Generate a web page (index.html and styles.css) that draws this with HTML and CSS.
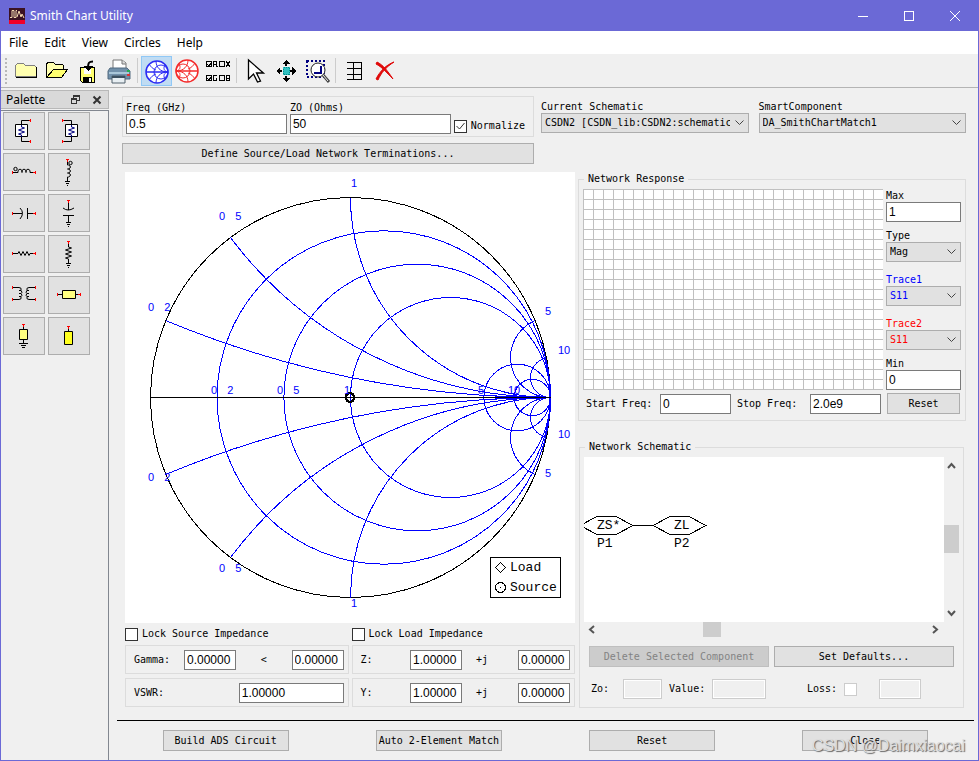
FILE: index.html
```html
<!DOCTYPE html>
<html lang="en">
<head>
<meta charset="utf-8">
<title>Smith Chart Utility</title>
<link rel="stylesheet" href="styles.css">
</head>
<body>
<div class="window">
  <header class="titlebar">
    <svg class="app-icon" width="16" height="16" viewBox="0 0 16 16" aria-hidden="true">
      <rect width="16" height="16" rx="1" fill="#3b1222"/>
      <rect y="12" width="16" height="4" fill="#f00028"/>
      <path class="smooth" d="M1 9.500h2v-7h2v7h2v-7h1M8 9l2-6 2 6 1-3 2 4" fill="none" stroke="#f4d9b0"/>
    </svg>
    <h1>Smith Chart Utility</h1>
    <div class="window-controls">
      <button aria-label="Minimize"><svg width="12" height="12" viewBox="0 0 12 12"><path d="M1 6.500h10"/></svg></button>
      <button aria-label="Maximize"><svg width="12" height="12" viewBox="0 0 12 12"><path d="M1.500 1.500h9v9h-9z"/></svg></button>
      <button aria-label="Close window"><svg class="smooth" width="12" height="12" viewBox="0 0 12 12"><path d="M1 1l10 10M11 1L1 11"/></svg></button>
    </div>
  </header>

  <nav class="menubar">
    <button>File</button><button>Edit</button><button>View</button><button>Circles</button><button>Help</button>
  </nav>

  <div class="toolbar">
    <span class="grip"></span>
    <button aria-label="New"><svg viewBox="0 0 31 30">
      <path d="M4.500 20.500v-11l2-2h6l2 2h9l2 2v9z" fill="#ffffb0" stroke="#808080"/>
      <path d="M5 21.500h20.500v-11" fill="none" stroke="#000"/>
    </svg></button>
    <button aria-label="Open"><svg viewBox="0 0 31 30">
      <path d="M4.500 20.500v-12l1-2h6l2 2h7l1 1v4" fill="#ffffb0" stroke="#000"/>
      <path d="M4.500 21.500l7-8h14l-6 8z" fill="#ffff70" stroke="#000"/>
    </svg></button>
    <button aria-label="Save"><svg viewBox="0 0 31 30">
      <path d="M7.500 11.500h14v15h-12l-2-2z" fill="#ffff70" stroke="#000"/>
      <path d="M11 12h7v6h-7z" fill="#fff"/>
      <path d="M10 21h9v6h-9z"/>
      <path d="M16 22h2v4h-2z" fill="#fff"/>
      <path class="smooth" d="M20 5.500c-4 0-5 1-5 7" fill="none" stroke="#000" stroke-width="2"/>
      <path d="M10 10h10l-5 5z"/>
    </svg></button>
    <button aria-label="Print"><svg class="smooth" viewBox="0 0 31 30">
      <path d="M9 14V4h9l4 3v7z" fill="#fff" stroke="#777"/>
      <path d="M18 4v4h4" fill="#ddd" stroke="#777"/>
      <path d="M6 12h17l3 3v8H4v-8z" fill="#7190aa" stroke="#536b80"/>
      <path d="M5 17h20" stroke="#a9c6d8" stroke-width="2"/>
      <path d="M8 20h13v7H8z" fill="#e7eef2" stroke="#50606d"/>
      <path d="M8 20h13v2H8z" fill="#3c5060"/>
      <path d="M23 14h3v2h-3z" fill="#20b050"/><path d="M23 18h3v2h-3z" fill="#d33"/>
    </svg></button>
    <span class="separator"></span>
    <button class="active" aria-label="Impedance chart"><svg class="smooth" viewBox="0 0 31 30">
      <g fill="none" stroke="#2a2af4">
        <circle cx="16" cy="16" r="11" fill="#fff" stroke-width="1.500"/>
        <circle cx="20" cy="16" r="7"/>
        <path d="M5 16h22" stroke-width="1.500"/>
        <path d="M15 5c0 6 4 11 12 11-8 0-12 5-12 11M8 8c2 3 4 5 7 6M8 24c2-3 4-5 7-6M27 16c-4-1-5-3-3-8M27 16c-4 1-5 3-3 8"/>
      </g>
    </svg></button>
    <button aria-label="Admittance chart"><svg class="smooth" viewBox="0 0 31 30">
      <g fill="none" stroke="#f42a2a">
        <circle cx="15" cy="15" r="11" fill="#fff" stroke-width="1.500"/>
        <circle cx="11" cy="15" r="7"/>
        <path d="M4 15h22" stroke-width="1.500"/>
        <path d="M16 4c0 6-4 11-12 11 8 0 12 5 12 11M23 7c-2 3-4 5-7 6M23 23c-2-3-4-5-7-6M4 15c4-1 5-3 3-8M4 15c4 1 5 3 3 8"/>
      </g>
    </svg></button>
    <button aria-label="Trace colors"><svg viewBox="0 0 31 30">
      <g fill="none" stroke="#000">
        <path d="M3.500 5.500h5v5h-5zM16.500 5.500h5v5h-5zM3.500 19.500h5v5h-5zM16.500 19.500h5v5h-5z"/>
        <path d="M4 8l2 2 3-4M4 22l2 2 3-4"/>
        <path d="M10.500 11V5.500h3v3h-3M12.500 8.500l2 2.500M23 5l4 6M27 5l-4 6"/>
        <path d="M14 19.500h-3.500v5h3v-2.500h-1M23.500 19.500h3v5h-3zM23 22h3"/>
      </g>
    </svg></button>
    <span class="separator"></span>
    <button aria-label="Select"><svg class="smooth" viewBox="0 0 31 30">
      <path d="M8.500 4v19l5-5 4 8 3-1-4-8h7z" fill="#fff" stroke="#000" stroke-width="1.300"/>
    </svg></button>
    <button aria-label="Pan"><svg viewBox="0 0 31 30">
      <path d="M15 4l4 4h-3v2h-2V8h-3zM15 26l4-4h-3v-2h-2v2h-3zM5 15l4-4v3h2v2H9v3zM25 15l-4-4v3h-2v2h2v3z"/>
      <path d="M12 11h7v8h-7z" fill="#30c0c0"/><path d="M12.500 11.500h6v7h-6z" fill="none" stroke="#088" stroke-dasharray="1 1"/>
    </svg></button>
    <button aria-label="Zoom area"><svg class="smooth" viewBox="0 0 31 30">
      <path d="M5 5h17v16H5z" fill="none" stroke="#000080" stroke-width="2" stroke-dasharray="2 2"/>
      <circle cx="16" cy="14" r="7" fill="#fff" stroke="#222"/>
      <path d="M12 17h7v-7" fill="none" stroke="#000080" stroke-width="2"/>
      <path d="M21 19l6 7" stroke="#444" stroke-width="3"/><path d="M21 19l5 6" stroke="#eee"/>
    </svg></button>
    <span class="separator"></span>
    <button aria-label="Table"><svg viewBox="0 0 31 30">
      <path d="M8 6.500h15M8 12.500h15M8 18.500h15M8 23.500h15M14.500 6v18M22.500 6v18" fill="none" stroke="#000"/>
    </svg></button>
    <button aria-label="Delete"><svg class="smooth" viewBox="0 0 31 30">
      <path d="M7 6c6 3 10 8 16 17-7-7-11-12-17-15zM24 6C16 11 11 17 8 24l-2-1C10 15 16 9 24 6z" fill="#e00808" stroke="#e00808"/>
    </svg></button>
  </div>

  <div class="body">
    <aside class="palette">
      <div class="palette-head">
        <h2>Palette</h2>
        <button aria-label="Float palette"><svg width="10" height="10" viewBox="0 0 10 10"><path class="thin" d="M2.500 3V.500h6v5H6M2 1.500h7M.500 3.500h5v5h-5zM0 4.500h6"/></svg></button>
        <button aria-label="Close palette"><svg class="smooth" width="10" height="10" viewBox="0 0 10 10"><path d="M1.500 1.500l7 7M8.500 1.500l-7 7"/></svg></button>
      </div>
      <div class="parts">
        <button aria-label="Source impedance"><svg viewBox="0 0 42 38">
          <path class="w" d="M26 8.500h-7.500v21H26"/><path class="box" d="M12.500 12.500h12v12h-12z"/>
          <path class="z" d="M18.500 13v2l3 1-6 2 6 2-6 2 3 1v2"/><path class="t" d="M27.500 7v3M27.500 28v3M26 8.500h1M26 29.500h1"/></svg></button>
        <button aria-label="Load impedance"><svg viewBox="0 0 42 38">
          <path class="w" d="M16 8.500h7.500v21H16"/><path class="box" d="M17.500 12.500h12v12h-12z"/>
          <path class="z" d="M23.500 13v2l3 1-6 2 6 2-6 2 3 1v2"/><path class="t" d="M14.500 7v3M14.500 28v3M15 8.500h1M15 29.500h1"/></svg></button>
        <button aria-label="Series inductor"><svg viewBox="0 0 42 38">
          <path class="w" d="M10 19.500h5v-2q2-3 4 0v2-2q2-3 4 0v2-2q2-3 4 0v2h5"/><circle class="w" cx="12.500" cy="16" r="1.700"/>
          <path class="t" d="M9.500 18v3M32.500 18v3M30 19.500h2"/></svg></button>
        <button aria-label="Shunt inductor"><svg viewBox="0 0 42 38">
          <path class="w" d="M19.500 8v4h1q4 2 0 4h-1 1q4 2 0 4h-1 1q4 2 0 4h-1v4M17 28.500h5M18 30.500h3M19 32.500h1"/><circle class="w" cx="22.500" cy="10" r="1.700"/>
          <path class="t" d="M18 6.500h3M19.500 7v2"/></svg></button>
        <button aria-label="Series capacitor"><svg viewBox="0 0 42 38">
          <path class="w" d="M10 19.500h9M17 14q5 5 0 11M24.500 14v11M24.500 19.500H32"/>
          <path class="t" d="M9.500 18v3M32.500 18v3M30 19.500h2"/></svg></button>
        <button aria-label="Shunt capacitor"><svg viewBox="0 0 42 38">
          <path class="w" d="M20.500 8v8M15 14q5 4 11 0M15 21.500h11M20.500 22v6M18 28.500h5M19 30.500h3M20 32.500h1"/>
          <path class="t" d="M19 6.500h3M20.500 7v2"/></svg></button>
        <button aria-label="Series resistor"><svg viewBox="0 0 42 38">
          <path class="w" d="M10 18.500h5l1-2 2 4 2-4 2 4 2-4 2 4 1-2h5"/>
          <path class="t" d="M9.500 17v3M32.500 17v3M30 18.500h2"/></svg></button>
        <button aria-label="Shunt resistor"><svg viewBox="0 0 42 38">
          <path class="w" d="M20.500 8v4l3 1-6 2 6 2-6 2 6 2-6 2 3 1v4M18 28.500h5M19 30.500h3M20 32.500h1"/>
          <path class="t" d="M19 6.500h3M20.500 7v2"/></svg></button>
        <button aria-label="Transformer"><svg viewBox="0 0 42 38">
          <path class="w" d="M10 11.500h6q3 0 2 3h-2 2q2 2 0 3h-2 2q2 2 0 3h-2 2q1 3-2 3h-6M32 11.500h-6q-3 0-2 3h2-2q-2 2 0 3h2-2q-2 2 0 3h2-2q-1 3 2 3h6"/>
          <path class="t" d="M9.500 10v3M9.500 22v3M32.500 10v3M32.500 22v3"/></svg></button>
        <button aria-label="Series transmission line"><svg viewBox="0 0 42 38">
          <path class="w" d="M10 18.500h22"/><path class="line" d="M14.500 14.500h13v8h-13z"/>
          <path class="t" d="M9.500 17v3M32.500 17v3M30 18.500h2"/></svg></button>
        <button aria-label="Shorted stub"><svg viewBox="0 0 42 38">
          <path class="w" d="M20.500 8v18M16 26.500h9M18 28.500h5M19 30.500h3"/><path class="line" d="M16.500 12.500h8v10h-8z"/>
          <path class="t" d="M19 7.500h3M20.500 8v2"/></svg></button>
        <button aria-label="Open stub"><svg viewBox="0 0 42 38">
          <path class="w" d="M20.500 10v5"/><path class="line open" d="M16.500 14.500h8v13h-8z"/>
          <path class="t" d="M19 9.500h3M20.500 10v2"/></svg></button>
      </div>
    </aside>

    <main>
      <section class="settings">
        <div class="settings-left">
          <div class="group freq">
            <label class="stack">Freq (GHz)<input type="text" value="0.5"></label>
            <label class="stack">ZO (Ohms)<input type="text" value="50"></label>
            <label class="check"><input type="checkbox" checked>Normalize</label>
          </div>
          <button class="btn">Define Source/Load Network Terminations...</button>
        </div>
        <div class="settings-right">
          <label class="stack">Current Schematic<select><option>CSDN2 [CSDN_lib:CSDN2:schematic]</option></select></label>
          <label class="stack">SmartComponent<select><option>DA_SmithChartMatch1</option></select></label>
        </div>
      </section>

      <section class="work">
        <div class="chart-column">
          <svg class="chart" viewBox="0 0 450 451" role="img" aria-label="Smith chart">
            <rect width="450" height="451" fill="#fff"/>
            <circle class="k" cx="225.500" cy="225.500" r="200"/>
            <g class="b">
              <circle cx="258.800" cy="225.500" r="166.700"/>
              <circle cx="292.200" cy="225.500" r="133.300"/>
              <circle cx="325.500" cy="225.500" r="100"/>
              <circle cx="392.200" cy="225.500" r="33.300"/>
              <circle cx="407.300" cy="225.500" r="18.200"/>
              <path d="M425.500 225.500A1000 1000 0 0 1 40.900 148.600M425.500 225.500A1000 1000 0 0 0 40.900 302.400"/>
              <path d="M425.500 225.500A400 400 0 0 1 105.500 65.500M425.500 225.500A400 400 0 0 0 105.500 385.500"/>
              <path d="M425.500 225.500A200 200 0 0 1 225.500 25.500M425.500 225.500A200 200 0 0 0 225.500 425.500"/>
              <path d="M425.500 225.500A40 40 0 0 1 410.100 148.600M425.500 225.500A40 40 0 0 0 410.100 302.400"/>
              <path d="M425.500 225.500A20 20 0 0 1 421.500 185.900M425.500 225.500A20 20 0 0 0 421.500 265.100"/>
              <path d="M370 224.500h46M370 226.500h46M424.500 210v32M425.500 212v28"/>
            </g>
            <path class="k" d="M25.500 225.500h400"/>
            <g class="k"><circle cx="225" cy="225.500" r="5"/><path d="M225 220.500l5 5-5 5-5-5z"/></g>
            <g class="tick">
              <text x="226" y="15">1</text><text x="226" y="435">1</text>
              <text x="94" y="48">0<tspan dx="10">5</tspan></text><text x="94" y="400">0<tspan dx="10">5</tspan></text>
              <text x="23" y="139">0<tspan dx="10">2</tspan></text><text x="23" y="309">0<tspan dx="10">2</tspan></text>
              <text x="86" y="222">0<tspan dx="10">2</tspan></text><text x="152" y="222">0<tspan dx="10">5</tspan></text>
              <text x="219" y="222">1</text><text x="353" y="222">5</text><text x="383" y="222">10</text>
              <text x="420" y="143">5</text><text x="420" y="305">5</text>
              <text x="433" y="182">10</text><text x="433" y="266">10</text>
            </g>
            <path class="k" d="M365.500 385.500h70v40h-70zM375.500 390.500l5 5-5 5-5-5z"/>
            <circle class="k" cx="375.500" cy="415.500" r="5"/><path class="k" d="M375 415.500h1"/>
            <g class="vector"><text x="385" y="399">Load</text><text x="385" y="419">Source</text></g>
          </svg>
          <div class="terminations">
            <div class="side">
              <label class="check"><input type="checkbox">Lock Source Impedance</label>
              <div class="group pair"><label for="gm">Gamma:</label><input id="gm" type="text" value="0.00000"><label for="ga">&lt;</label><input id="ga" type="text" value="0.00000"></div>
              <div class="group single"><label for="vs">VSWR:</label><input id="vs" type="text" value="1.00000"></div>
            </div>
            <div class="side">
              <label class="check"><input type="checkbox">Lock Load Impedance</label>
              <div class="group pair"><label for="zr">Z:</label><input id="zr" type="text" value="1.00000"><label for="zi">+j</label><input id="zi" type="text" value="0.00000"></div>
              <div class="group pair"><label for="yr">Y:</label><input id="yr" type="text" value="1.00000"><label for="yi">+j</label><input id="yi" type="text" value="0.00000"></div>
            </div>
          </div>
        </div>

        <div class="network-column">
          <fieldset class="response">
            <legend>Network Response</legend>
            <div class="response-main">
              <div class="plot"></div>
              <div class="response-side">
                <label class="stack">Max<input type="text" value="1"></label>
                <label class="stack">Type<select><option>Mag</option></select></label>
                <label class="stack blue">Trace1<select><option>S11</option></select></label>
                <label class="stack red">Trace2<select><option>S11</option></select></label>
                <label class="stack">Min<input type="text" value="0"></label>
              </div>
            </div>
            <div class="range">
              <label for="start">Start Freq:</label><input id="start" type="text" value="0">
              <label for="stop">Stop Freq:</label><input id="stop" type="text" value="2.0e9">
              <button class="btn">Reset</button>
            </div>
          </fieldset>

          <fieldset class="schematic">
            <legend>Network Schematic</legend>
            <div class="viewport">
              <div class="canvas">
                <svg width="130" height="100" viewBox="0 0 130 100">
                  <path class="k" d="M-4 68.500l17-9h19l17 9-17 9H13zM49 68.500h20M69 68.500l17-9h19l17 9-17 9H86z"/>
                  <g class="vector"><text x="13" y="72">ZS*</text><text x="90" y="72">ZL</text><text x="13" y="90">P1</text><text x="90" y="90">P2</text></g>
                </svg>
              </div>
              <div class="scroll vertical">
                <svg width="15" height="16" viewBox="0 0 15 16"><path d="M4 11l3.500-4 3.500 4"/></svg>
                <span class="thumb"></span>
                <svg width="15" height="16" viewBox="0 0 15 16"><path d="M4 5l3.500 4 3.500-4"/></svg>
              </div>
              <div class="scroll horizontal">
                <svg width="16" height="15" viewBox="0 0 16 15"><path d="M10 4L6 7.500l4 3.500"/></svg>
                <span class="thumb"></span>
                <svg width="16" height="15" viewBox="0 0 16 15"><path d="M5 4l4 3.500L5 11"/></svg>
              </div>
            </div>
            <div class="actions">
              <button class="btn" disabled>Delete Selected Component</button>
              <button class="btn">Set Defaults...</button>
            </div>
            <div class="values">
              <label for="zo">Zo:</label><input id="zo" type="text" disabled>
              <label for="value">Value:</label><input id="value" type="text" disabled>
              <label for="loss">Loss:</label><input id="loss" type="checkbox" disabled><input type="text" aria-label="Loss value" disabled>
            </div>
          </fieldset>
        </div>
      </section>

      <footer>
        <button class="btn">Build ADS Circuit</button>
        <button class="btn">Auto 2-Element Match</button>
        <button class="btn">Reset</button>
        <button class="btn">Close</button>
      </footer>
    </main>
  </div>
  <div class="watermark">CSDN @Daimxiaocai</div>
</div>
</body>
</html>
```
FILE: styles.css
```css
* { box-sizing: border-box; }

body {
  margin: 0;
  background: #f0f0f0;
  color: #000;
  font: 10px/12px "DejaVu Sans Mono", "Liberation Mono", monospace;
}

button, input, select { font: inherit; color: inherit; margin: 0; }
button { padding: 0; border: 0; background: none; }
h1, h2 { margin: 0; font-weight: normal; }
svg { display: block; shape-rendering: crispEdges; }
.smooth { shape-rendering: auto; }

.window {
  position: relative;
  display: flex;
  flex-direction: column;
  min-height: 100vh;
  border: 1px solid #6b69d6;
}

/* Title bar, menus and toolbar */
.titlebar {
  display: flex;
  align-items: center;
  height: 30px;
  padding-left: 8px;
  background: #6b69d6;
  color: #fff;
}
.titlebar h1, .menubar, .palette h2 { font: 12px/16px "Noto Sans", "Open Sans", sans-serif; }
.titlebar h1 { margin-left: 5px; }
.window-controls { display: flex; margin-left: auto; }
.window-controls button { width: 46px; height: 28px; display: grid; place-items: center; }
.window-controls path { fill: none; stroke: #fff; }

.menubar { display: flex; height: 23px; background: #fff; }
.menubar button { padding: 0 8px; }

.toolbar {
  display: flex;
  height: 34px;
  padding-top: 2px;
  border-bottom: 1px solid #b4b4b4;
}
.toolbar button { width: 31px; height: 30px; }
.toolbar .active { background: #c0dcf3; box-shadow: inset 0 0 0 1px #90c8f6; }
.grip { width: 10px; }
.grip::before {
  content: "";
  display: block;
  width: 2px;
  height: 26px;
  margin: 2px 4px;
  background: repeating-linear-gradient(#b8b8b8 0 2px, transparent 2px 4px);
}
.separator { width: 6px; padding: 2px; }
.separator::before { content: ""; display: block; width: 1px; height: 25px; background: #ccc; }

.body { display: flex; flex: 1; }

/* Palette */
.palette { flex: none; width: 108px; padding-top: 2px; }
.palette-head {
  display: flex;
  align-items: center;
  height: 19px;
  padding: 0 6px 0 5px;
  gap: 11px;
  background: #d9d9d9;
  border: 1px solid #b8b8b8;
  border-left: 0;
}
.palette-head h2 { flex: 1; }
.palette-head path { fill: none; stroke: #333; stroke-width: 2; }
.palette-head .thin { stroke-width: 1; }
.parts {
  display: grid;
  grid-template-columns: 42px 42px;
  align-content: start;
  gap: 3px;
  height: calc(100% - 20px);
  margin-top: 1px;
  padding: 1px 2px;
  border-top: 1px solid #828790;
  border-right: 1px solid #828790;
}
.parts button { height: 38px; background: #e1e1e1; box-shadow: inset 0 0 0 1px #adadad; }
.parts svg { shape-rendering: auto; }
.w { fill: none; stroke: #000; }
.z { fill: none; stroke: #000080; }
.t { fill: none; stroke: #f00; }
.box { fill: #fff; stroke: #000; }
.line { fill: #ffff80; stroke: #000; }
.line.open { fill: #ffff20; }

/* Shared controls */
input[type="text"] {
  min-width: 0;
  height: 20px;
  padding: 0 2px;
  border: 1px solid #7a7a7a;
  border-radius: 0;
  background: #fff;
  font: 12px/16px "Liberation Sans", sans-serif;
}
input[type="text"]:disabled { background: #f0f0f0; border-color: #ccc; box-shadow: inset 0 0 0 1px #fff; }
select {
  appearance: none;
  min-width: 0;
  height: 20px;
  padding: 0 18px 0 3px;
  border: 1px solid #adadad;
  border-radius: 0;
  background: #e1e1e1 url("data:image/svg+xml,%3Csvg xmlns='http://www.w3.org/2000/svg' width='9' height='6'%3E%3Cpath d='M.5.5l4 4 4-4' fill='none' stroke='%23444'/%3E%3C/svg%3E") no-repeat right 4px center;
}
input[type="checkbox"] {
  appearance: none;
  width: 13px;
  height: 13px;
  border: 1px solid #333;
  background: #fff;
}
input[type="checkbox"]:checked {
  background: #fff url("data:image/svg+xml,%3Csvg xmlns='http://www.w3.org/2000/svg' width='11' height='11'%3E%3Cpath d='M1.500 5l3 3 5-6' fill='none' stroke='%23333'/%3E%3C/svg%3E");
}
input[type="checkbox"]:disabled { border-color: #ccc; }
.btn { height: 21px; background: #e1e1e1; border: 1px solid #adadad; text-align: center; }
.btn:disabled { background: #ccc; border-color: #bfbfbf; color: #838383; }
.group { border: 1px solid #dcdcdc; }
.stack { display: flex; flex-direction: column; min-width: 0; }
.stack select, .stack input { width: 100%; }
.check { display: flex; align-items: center; gap: 4px; }
.blue { color: #00f; }
.red { color: #f00; }

/* Main area */
main { flex: 1; min-width: 0; padding: 8px 4px 8px 8px; }

.settings { display: flex; gap: 7px; padding: 0 8px 0 5px; }
.settings-left { flex: 412; display: flex; flex-direction: column; gap: 6px; min-width: 0; }
.settings-right { flex: 425; display: flex; gap: 10px; padding-top: 5px; min-width: 0; }
.settings-right .stack { flex: 1; }
.freq { display: flex; gap: 3px; height: 41px; padding: 5px 8px 0 3px; }
.freq .stack { flex: 1; }
.freq .check { height: 20px; margin-top: 14px; }

.work { display: flex; gap: 3px; margin: 8px 8px 0 8px; }
.chart-column { flex: 450; min-width: 0; }
.network-column { flex: 388; min-width: 0; }

.chart { width: 100%; }
.k { fill: none; stroke: #000; }
.b { fill: none; stroke: #00f; }
.tick { fill: #00f; font: 11px "Liberation Sans", sans-serif; }
.vector { font: 13px "Liberation Mono", monospace; }

.terminations { display: flex; gap: 3px; margin-top: 4px; }
.side { flex: 1; display: flex; flex-direction: column; gap: 4px; min-width: 0; }
.side .check { height: 14px; }
.side .group { display: flex; align-items: center; height: 29px; padding: 0 4px 0 8px; }
.pair label:first-child { width: 50px; }
.pair input { width: 52px; }
.pair label { flex: none; }
.pair input + label { flex: 1; text-align: center; }
.side:last-child .pair label:first-child { flex: 1; }
.side:last-child .pair input + label { flex: none; width: 56px; padding-left: 14px; text-align: left; }
.single { justify-content: space-between; }
.single input { width: 50%; }

fieldset { min-width: 0; margin: 0; padding: 0 4px; border: 1px solid #dcdcdc; }
legend { margin-left: 1px; padding: 0 4px; line-height: 14px; }
.response { height: 249px; padding-top: 3px; }
.response-main { display: flex; gap: 3px; }
.plot {
  flex: 1;
  height: 201px;
  background:
    linear-gradient(#c0c0c0 1px, transparent 1px) 0 0 / 10px 10px,
    linear-gradient(90deg, #c0c0c0 1px, #fff 1px) 0 0 / 10px 10px;
}
.response-side { width: 75px; display: flex; flex-direction: column; gap: 8px; padding-top: 1px; }
.response-side .blue { padding: 4px 0; }
.range { display: flex; align-items: center; gap: 6px; margin-top: 3px; padding: 0 1px 0 3px; }
.range input { flex: 1; width: 0; }
.range .btn { width: 73px; }
.range label:first-child { width: 68px; }
.range label { width: 67px; }

.schematic { height: 268px; margin: 19px 2px 0 1px; padding-top: 3px; }
.viewport { display: grid; grid-template: 165px 15px / 1fr 15px; }
.canvas { background: #fff; overflow: hidden; }
.scroll { display: flex; }
.scroll path { fill: none; stroke: #555; stroke-width: 2; shape-rendering: auto; }
.scroll svg { flex: none; }
.thumb { background: #cdcdcd; }
.vertical { flex-direction: column; }
.vertical .thumb { height: 28px; margin: 52px 0 auto; }
.horizontal .thumb { width: 18px; margin: 0 auto 0 103px; }
.actions { display: flex; gap: 5px; margin: 9px 5px 0; }
.actions .btn { flex: 1; }
.values { display: flex; align-items: center; margin: 12px 38px 0 7px; }
.values label { margin-right: 7px; }
#zo { width: 39px; margin: 0 7px; }
#value { width: 54px; }
.values label[for="loss"] { margin-left: auto; }
.values #loss + input { width: 42px; margin-left: 22px; }

footer {
  display: grid;
  grid-template-columns: repeat(4, 1fr);
  justify-items: center;
  margin-top: 12px;
  padding: 9px 2px 0;
  border-top: 1px solid #000;
}
footer .btn { width: 126px; }

.watermark {
  position: absolute;
  right: 13px;
  bottom: 4px;
  color: #ddd;
  text-shadow: 1px 1px 1px #666;
  font: 16px/20px "Liberation Sans", sans-serif;
  pointer-events: none;
}
```
